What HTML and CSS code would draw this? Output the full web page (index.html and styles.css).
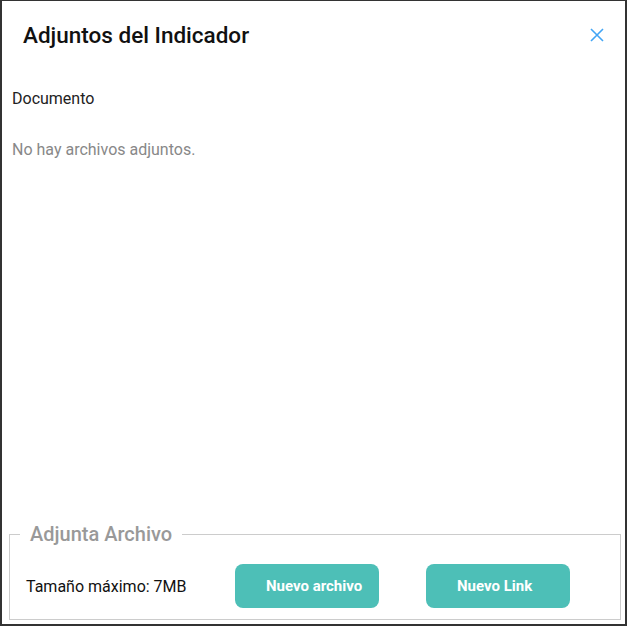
FILE: index.html
```html
<!DOCTYPE html>
<html lang="es">
<head>
<meta charset="utf-8">
<link rel="stylesheet" href="styles.css">
</head>
<body>
<div class="dialog">
  <div class="header">
    <h1 class="title">Adjuntos del Indicador</h1>
    <button class="close" aria-label="Cerrar">
      <svg width="14" height="14" viewBox="0 0 14 14"><path d="M1 1 L13 13 M13 1 L1 13" stroke="#42a5f5" stroke-width="1.6" fill="none"/></svg>
    </button>
  </div>
  <div class="content">
    <div class="label">Documento</div>
    <div class="empty">No hay archivos adjuntos.</div>
  </div>
  <fieldset class="upload">
    <legend class="legend">Adjunta Archivo</legend>
    <div class="row">
      <span class="size">Tamaño máximo: 7MB</span>
      <button class="btn">Nuevo archivo</button>
      <button class="btn">Nuevo Link</button>
    </div>
  </fieldset>
</div>
</body>
</html>
```
FILE: styles.css
```css
html, body { margin: 0; padding: 0; background: #fff; }
body { font-family: Roboto, "Noto Sans", sans-serif; }
.dialog {
  width: 627px;
  height: 626px;
  box-sizing: border-box;
  border: 2px solid #333;
  border-top-width: 1px;
  display: flex;
  flex-direction: column;
  background: #fff;
}
.header {
  display: flex;
  align-items: center;
  justify-content: space-between;
  padding: 0 21px 0 21px;
  height: 68px;
}
.title {
  margin: 0;
  font-size: 22.5px;
  font-weight: 500;
  color: #111;
}
.close {
  border: 0;
  background: none;
  padding: 0;
  width: 14px;
  height: 14px;
  display: flex;
  cursor: pointer;
}
.content {
  flex: 1;
  padding: 20px 10px 0;
}
.label {
  font-size: 16px;
  color: #222;
  line-height: 19px;
}
.empty {
  margin-top: 32px;
  font-size: 16px;
  color: #888;
  line-height: 19px;
}
.upload {
  margin: 0 4px 4px 7px;
  padding: 0 10px 11px 16px;
  border: 1px solid #ccc;
  min-width: 0;
}
.legend {
  padding: 0 10px;
  margin-left: -6px;
  font-size: 20px;
  line-height: 24px;
  font-weight: 500;
  color: #999;
}
.row {
  display: flex;
  align-items: center;
  gap: 47px;
  margin-top: 18px;
}
.size {
  font-size: 16px;
  color: #111;
  width: 162px;
}
.btn {
  width: 144px;
  height: 44px;
  border: 0;
  border-radius: 8px;
  background: #4dbfb7;
  color: #fff;
  font-family: Roboto, sans-serif;
  font-weight: 700;
  font-size: 15px;
  text-align: left;
  padding: 0 0 0 31px;
}
```
